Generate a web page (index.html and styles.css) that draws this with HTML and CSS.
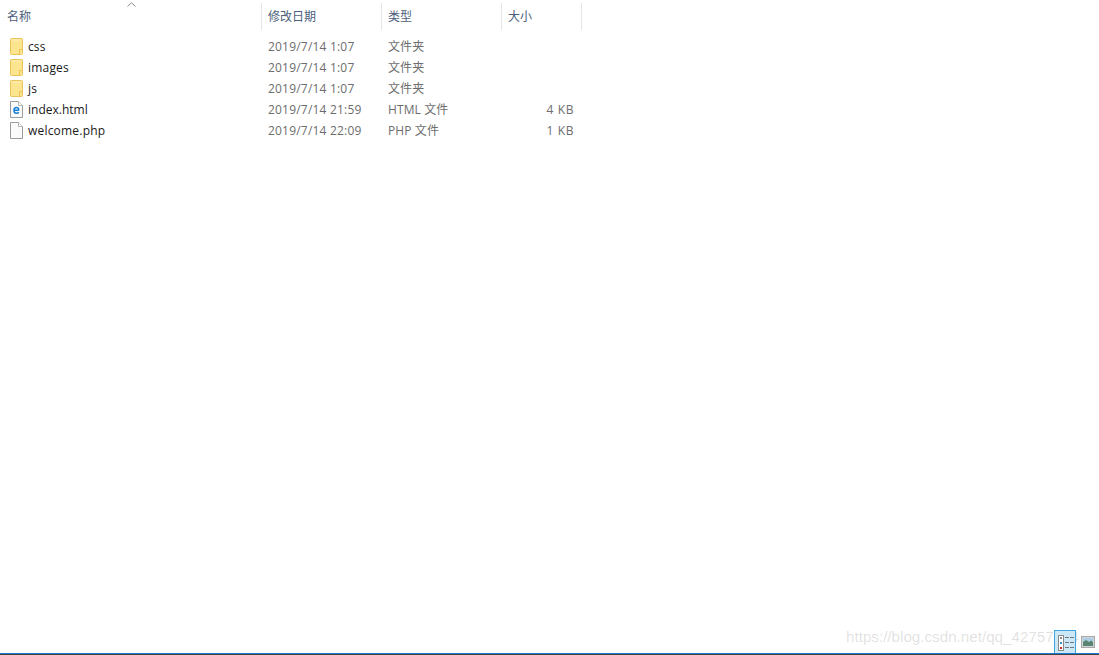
FILE: index.html
```html
<!DOCTYPE html>
<html lang="zh">
<head>
<meta charset="utf-8">
<title>文件列表</title>
<link rel="stylesheet" href="styles.css">
</head>
<body>
<div class="window">
  <div class="header">
    <div class="col col-name">名称<svg class="sort" width="9" height="5" viewBox="0 0 9 5"><path d="M0.500 4.500 L4.500 0.700 L8.500 4.500" fill="none" stroke="#8a8a8a" stroke-width="1"/></svg></div>
    <div class="col col-date">修改日期</div>
    <div class="col col-type">类型</div>
    <div class="col col-size">大小</div>
  </div>
  <div class="list">
    <div class="row">
      <div class="cell-name"><svg class="icon" width="13" height="17" viewBox="0 0 13 17"><use href="#folder"/></svg><span>css</span></div>
      <div class="cell-date">2019/7/14 1:07</div><div class="cell-type">文件夹</div><div class="cell-size"></div>
    </div>
    <div class="row">
      <div class="cell-name"><svg class="icon" width="13" height="17" viewBox="0 0 13 17"><use href="#folder"/></svg><span class="wide">images</span></div>
      <div class="cell-date">2019/7/14 1:07</div><div class="cell-type">文件夹</div><div class="cell-size"></div>
    </div>
    <div class="row">
      <div class="cell-name"><svg class="icon" width="13" height="17" viewBox="0 0 13 17"><use href="#folder"/></svg><span>js</span></div>
      <div class="cell-date">2019/7/14 1:07</div><div class="cell-type">文件夹</div><div class="cell-size"></div>
    </div>
    <div class="row">
      <div class="cell-name"><svg class="icon" width="13" height="17" viewBox="0 0 13 17"><use href="#page"/><path d="M9 9.200H4C4.100 7.600 5 6.600 6.400 6.600C7.900 6.600 8.800 7.700 8.800 9.200M4 9.400C4 11 5.100 12.200 6.600 12.200C7.500 12.200 8.300 11.900 8.800 11.300" fill="none" stroke="#1b7fd6" stroke-width="1.500"/></svg><span class="tight">index.html</span></div>
      <div class="cell-date">2019/7/14 21:59</div><div class="cell-type">HTML 文件</div><div class="cell-size">4 KB</div>
    </div>
    <div class="row">
      <div class="cell-name"><svg class="icon" width="13" height="17" viewBox="0 0 13 17"><use href="#page"/></svg><span class="wide">welcome.php</span></div>
      <div class="cell-date">2019/7/14 22:09</div><div class="cell-type">PHP 文件</div><div class="cell-size">1 KB</div>
    </div>
  </div>
  <div class="watermark">https://blog.csdn.net/qq_42757964</div>
  <div class="views">
    <div class="view-btn active">
      <svg width="20" height="20" viewBox="0 0 20 20">
        <rect x="3.500" y="3.500" width="5" height="15" fill="#fff" stroke="#8a8a8a"/>
        <rect x="5" y="5" width="2" height="2" fill="#8a8a8a"/>
        <rect x="5" y="10" width="2" height="2" fill="#3d8fd6"/>
        <rect x="5" y="15" width="2" height="2" fill="#d03030"/>
        <path d="M10 5.500h4M15 5.500h4M10 10.500h4M15 10.500h4M10 15.500h4M15 15.500h4" stroke="#777" stroke-width="1"/>
      </svg>
    </div>
    <div class="view-btn plain">
      <svg width="14" height="12" viewBox="0 0 14 12">
        <rect x="0.500" y="0.500" width="13" height="11" fill="#eef2f4" stroke="#9a9a9a"/>
        <rect x="1" y="1" width="12" height="10" fill="none" stroke="#b8b8b8"/>
        <rect x="2" y="2" width="10" height="4" fill="#a9cfe6"/>
        <path d="M2 6l3-2 3 2 2-1.500 2 1.500v4H2z" fill="#5a8472"/>
      </svg>
    </div>
  </div>
  <div class="bottom-line"></div>
</div>
<svg class="defs" width="0" height="0">
  <defs>
    <g id="folder">
      <path d="M0.500 1.500a1 1 0 0 1 1-1h10a1 1 0 0 1 1 1v14a1 1 0 0 1-1 1h-10a1 1 0 0 1-1-1z" fill="#fde48f" stroke="#eac35a"/>
      <path d="M9.500 16v-4.500h3" fill="none" stroke="#eac35a"/>
      <path d="M1.500 1.500h9v1h-9z" fill="#fff2c0"/>
    </g>
    <g id="page">
      <path d="M0.500 0.500h8l4 4v12h-12z" fill="#fbfbfb" stroke="#9b9b9b"/>
      <path d="M8.500 0.500v4h4" fill="#fff" stroke="#b5b5b5"/>
    </g>
  </defs>
</svg>
</body>
</html>
```

FILE: styles.css
```css
* { box-sizing: border-box; }
html, body { margin: 0; padding: 0; height: 100%; background: #fff; overflow: hidden; }
body { font-family: "Open Sans", "Noto Sans CJK SC", sans-serif; font-size: 12px; }
.window { position: relative; width: 1099px; height: 655px; display: flex; flex-direction: column; padding-top: 3px; }
.header { display: grid; grid-template-columns: 262px 120px 120px 80px; height: 27px; color: #4c607a; }
.col { position: relative; display: flex; align-items: center; padding: 0 0 2px 6px; border-right: 1px solid #e5e5e5; }
.col-name { padding-left: 7px; }
.sort { position: absolute; left: 127px; top: -1px; }
.list { display: flex; flex-direction: column; padding-top: 6px; }
.row { display: grid; grid-template-columns: 262px 120px 120px 72px; height: 21px; align-items: center; color: #6d6d6d; }
.cell-name { display: flex; align-items: center; padding-left: 10px; color: #1a1a1a; font-size: 12px; letter-spacing: 0.1px; }
.wide { letter-spacing: 0.2px; }
.tight { letter-spacing: 0; }
.icon { margin-right: 5px; flex: none; }
.cell-date { padding-left: 6px; letter-spacing: 0.2px; }
.cell-type { padding: 0 0 2px 6px; letter-spacing: 0.1px; }
.cell-size { text-align: right; letter-spacing: 0.6px; }
.watermark { position: absolute; left: 846px; top: 628px; font-family: "Liberation Sans", sans-serif; font-size: 15.200px; color: rgba(120,120,120,0.22); white-space: nowrap; }
.views { position: absolute; left: 1054px; bottom: 2px; display: flex; align-items: center; gap: 5px; }
.view-btn { display: flex; align-items: center; justify-content: center; height: 23px; }
.view-btn.active { width: 22px; background: #cce8f6; border: 1px solid #3fa5dc; border-bottom: 0; }
.view-btn.plain { width: 14px; }
.bottom-line { position: absolute; left: 0; right: 0; bottom: 0; height: 2px; background: #444; border-top: 1px solid #1a78d0; }
.defs { position: absolute; }
```
